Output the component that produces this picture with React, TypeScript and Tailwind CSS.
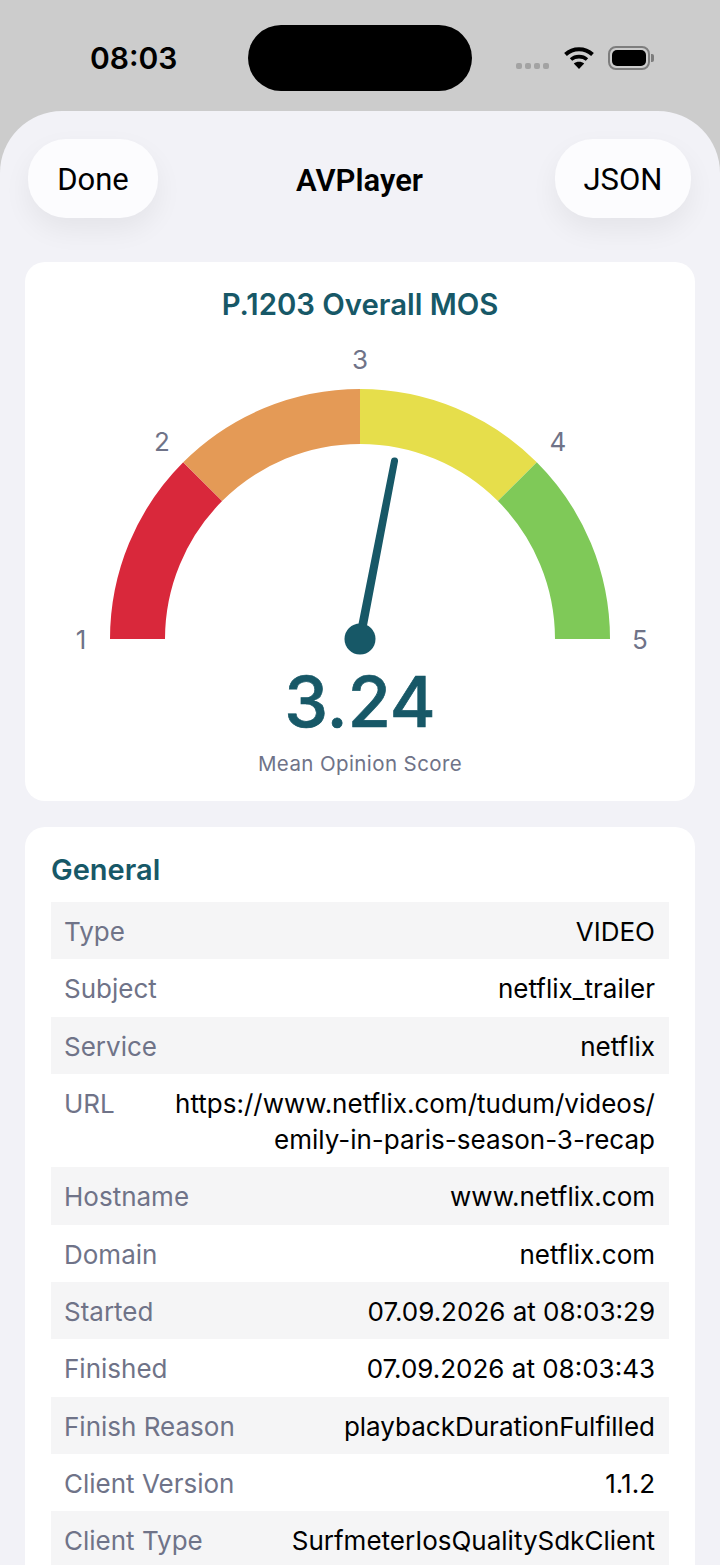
const rows: { label: string; value: string[] }[] = [
  { label: 'Type', value: ['VIDEO'] },
  { label: 'Subject', value: ['netflix_trailer'] },
  { label: 'Service', value: ['netflix'] },
  { label: 'URL', value: ['https://www.netflix.com/tudum/videos/', 'emily-in-paris-season-3-recap'] },
  { label: 'Hostname', value: ['www.netflix.com'] },
  { label: 'Domain', value: ['netflix.com'] },
  { label: 'Started', value: ['07.09.2026 at 08:03:29'] },
  { label: 'Finished', value: ['07.09.2026 at 08:03:43'] },
  { label: 'Finish Reason', value: ['playbackDurationFulfilled'] },
  { label: 'Client Version', value: ['1.1.2'] },
  { label: 'Client Type', value: ['SurfmeterIosQualitySdkClient'] },
];

function StatusBar() {
  return (
    <div className="relative h-[111px] shrink-0 bg-[#cccccc]">
      <span className="absolute left-[90px] top-[39px] text-[30px] leading-[38px] font-semibold text-black">
        08:03
      </span>
      <div className="absolute left-[248px] top-[25px] h-[66px] w-[224px] rounded-[33px] bg-black" />
      <div className="absolute left-[516px] top-[63px] flex gap-[3px]">
        <div className="h-[6px] w-[6px] rounded-[2px] bg-[#a3a3a3]" />
        <div className="h-[6px] w-[6px] rounded-[2px] bg-[#a3a3a3]" />
        <div className="h-[6px] w-[6px] rounded-[2px] bg-[#a3a3a3]" />
        <div className="h-[6px] w-[6px] rounded-[2px] bg-[#a3a3a3]" />
      </div>
      <svg className="absolute left-[564px] top-[46px]" width="30" height="24" viewBox="0 0 30 24">
        <path d="M1.5 8.5 C9 1.5 21 1.5 28.5 8.5" fill="none" stroke="#000" strokeWidth="4" />
        <path d="M7 13.5 C11.5 9.6 18.5 9.6 23 13.5" fill="none" stroke="#000" strokeWidth="3.6" />
        <path d="M15 23 L9.8 17.6 C12.6 15 17.4 15 20.2 17.6 Z" fill="#000" />
      </svg>
      <div className="absolute left-[608px] top-[46px] h-[24px] w-[42px] rounded-[8px] border-2 border-[#7d7d7d] p-[2px]">
        <div className="h-full w-full rounded-[5px] bg-black" />
      </div>
      <div className="absolute left-[651px] top-[54px] h-[8px] w-[3px] rounded-r-[2px] bg-[#7d7d7d]" />
    </div>
  );
}

function NavButton({ label, className }: { label: string; className: string }) {
  return (
    <div
      className={`flex h-[79px] items-center justify-center rounded-[38px] bg-[#fcfcfe] pt-[3px] text-[31px] text-black shadow-[0_12px_28px_rgba(0,0,0,0.06)] ${className}`}
    >
      {label}
    </div>
  );
}

function Gauge() {
  const cx = 360;
  const cy = 377;
  const arc = (from: number, to: number, color: string) => {
    const rad = (a: number) => (a * Math.PI) / 180;
    const outer = 250;
    const inner = 195;
    const p = (r: number, a: number) => `${cx - r * Math.cos(rad(a))} ${cy - r * Math.sin(rad(a))}`;
    return (
      <path
        d={`M${p(outer, from)} A${outer} ${outer} 0 0 1 ${p(outer, to)} L${p(inner, to)} A${inner} ${inner} 0 0 0 ${p(inner, from)} Z`}
        fill={color}
      />
    );
  };
  return (
    <svg className="absolute left-0 top-0" width="670" height="460" viewBox="25 0 670 460">
      {arc(0, 45, '#d9283b')}
      {arc(45, 90, '#e49a56')}
      {arc(90, 135, '#e6de4b')}
      {arc(135, 180, '#7fc958')}
      <g fill="#6f7388" fontSize="26" textAnchor="middle" fontFamily="Inter, sans-serif">
        <text x="81" y="387">1</text>
        <text x="162" y="189">2</text>
        <text x="360" y="107">3</text>
        <text x="558" y="189">4</text>
        <text x="640" y="387">5</text>
      </g>
      <path d="M355.5 377 L391 198.5 A3.5 3.5 0 0 1 398 199.5 L364.5 377 Z" fill="#175867" />
      <circle cx="360" cy="377" r="15.5" fill="#175867" />
    </svg>
  );
}

export default function App() {
  return (
    <div className="flex h-[1565px] w-[720px] flex-col overflow-hidden bg-[#cccccc] [font-family:Inter,sans-serif]">
      <StatusBar />
      <div className="flex-1 rounded-t-[62px] bg-[#f2f2f7] px-[25px]">
        <div className="-mx-[25px] grid h-[151px] grid-cols-[1fr_auto_1fr] items-start pl-[28px] pr-[29px] pt-[28px] [font-family:Roboto,sans-serif]">
          <NavButton label="Done" className="w-[130px]" />
          <span className="mt-[22px] text-[31px] font-semibold leading-[40px] text-black">AVPlayer</span>
          <NavButton label="JSON" className="w-[136px] justify-self-end" />
        </div>

        <section className="relative h-[539px] rounded-[20px] bg-white">
          <h2 className="pt-[25px] text-center text-[29.3px] font-semibold leading-[36px] text-[#175867]">
            P.1203 Overall MOS
          </h2>
          <Gauge />
          <div className="absolute inset-x-0 top-[400px] text-center text-[70px] font-medium leading-[80px] text-[#175867] [-webkit-text-stroke:0.7px_#175867]">
            3.24
          </div>
          <div className="absolute inset-x-0 top-[488px] text-center text-[20.5px] leading-[28px] tracking-[0.4px] text-[#6f7388]">
            Mean Opinion Score
          </div>
        </section>

        <section className="mt-[26px] rounded-[20px] bg-white px-[26px] pb-[60px] pt-[25px]">
          <h2 className="mb-[14px] text-[29px] font-semibold leading-[36px] text-[#175867]">General</h2>
          <div className="flex flex-col">
            {rows.map((row, i) => (
              <div
                key={row.label}
                className={`flex justify-between pb-[10px] pl-[13px] pr-[14px] pt-[12px] text-[26px] leading-[35.33px] ${i % 2 === 0 ? 'bg-[#f5f5f6]' : ''}`}
              >
                <span className="text-[#6f7388]">{row.label}</span>
                <div className="flex flex-col gap-[0.7px] text-right text-black">
                  {row.value.map((line) => (
                    <span key={line}>{line}</span>
                  ))}
                </div>
              </div>
            ))}
          </div>
        </section>
      </div>
    </div>
  );
}
